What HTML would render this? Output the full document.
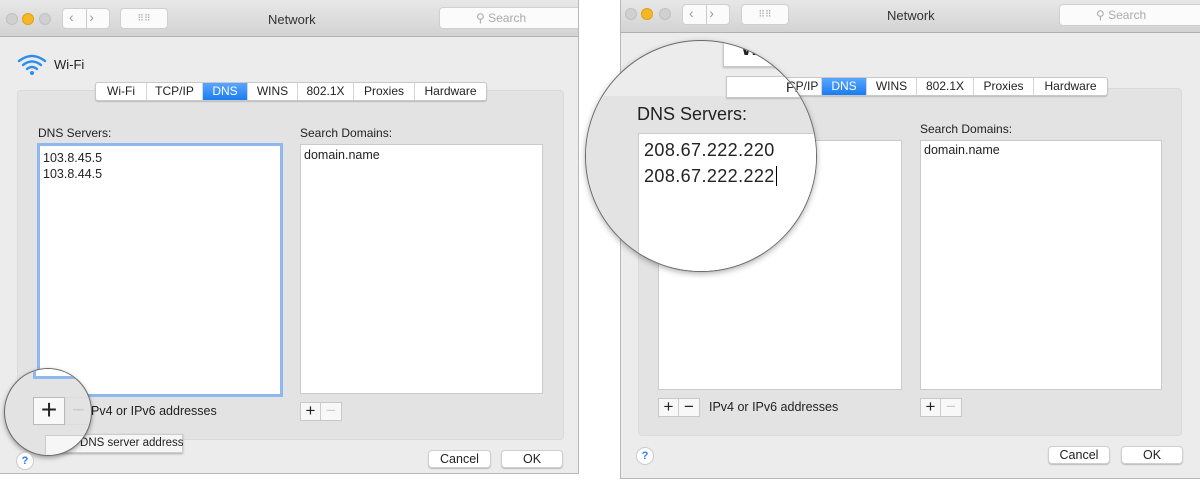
<!DOCTYPE html>
<html><head><meta charset="utf-8"><style>
*{margin:0;padding:0;box-sizing:border-box}
body{width:1200px;height:481px;background:#fff;position:relative;overflow:hidden;font-family:"Liberation Sans",sans-serif;font-size:12px;color:#222}
.a{position:absolute;white-space:nowrap}
.win{position:absolute;background:#ececec;border:1px solid #b8b8b8;overflow:hidden}
.bar{position:absolute;left:0;right:0;top:0;background:linear-gradient(#e8e8e8,#d3d3d3);border-bottom:1px solid #b0b0b0}
.dot{position:absolute;width:12px;height:12px;border-radius:50%;background:#d0d0d0;border:1px solid #c0c0c0}
.btn{position:absolute;background:#fbfbfb;border:1px solid #cfcfcf;border-radius:4px}
.panel{position:absolute;background:#e3e3e3;border:1px solid #dadada;border-radius:4px}
.tabs{position:absolute;display:flex;height:19px;background:#fff;border:1px solid #c8c8c8;border-radius:3px;box-shadow:0 1px 1px #bbb}
.tabs div{border-right:1px solid #d5d5d5;text-align:center;line-height:17px;font-size:12px}
.tabs .on{background:linear-gradient(#5aa6ff,#1a7cf0);color:#fff}
.list{position:absolute;background:#fff;border:1px solid #cbcbcb}
.pm{position:absolute;display:flex;height:19px;background:#f8f8f8;border:1px solid #c8c8c8}
.pm div{width:20px;text-align:center;line-height:16px;font-size:17px;border-right:1px solid #ccc}
.pb{position:absolute;background:#fff;border:1px solid #cfcfcf;border-radius:4px;text-align:center;line-height:16px;font-size:12.5px;box-shadow:0 1px 1px #bbb}
.help{position:absolute;width:18px;height:18px;border-radius:50%;background:#fff;border:1px solid #ccc;color:#2a7bf2;text-align:center;font-size:11px;line-height:16px;font-weight:bold}
</style></head><body>

<!-- LEFT WINDOW -->
<div class="win" style="left:-2px;top:-2px;width:581px;height:476px">
 <div class="bar" style="height:38px"></div>
 <div class="dot" style="left:7px;top:14px"></div>
 <div class="dot" style="left:23px;top:14px;background:#f6b726;border-color:#e0a010"></div>
 <div class="dot" style="left:40px;top:14px"></div>
 <div class="btn" style="left:63px;top:9px;width:48px;height:21px"></div>
 <div class="a" style="left:70px;top:10px;color:#999;font-size:14px">&lsaquo;&nbsp;&nbsp;&nbsp;&nbsp;&rsaquo;</div>
 <div class="a" style="left:87px;top:10px;width:1px;height:20px;background:#ccc"></div>
 <div class="btn" style="left:121px;top:9px;width:48px;height:21px;color:#aaa;text-align:center;font-size:9px;line-height:19px">⠿⠿</div>
 <div class="a" style="left:269px;top:13px;font-size:13px;color:#333">Network</div>
 <div class="btn" style="left:440px;top:8px;width:160px;height:22px;color:#aaa;font-size:12px;line-height:20px;padding-left:36px">&#9906; Search</div>
</div>
<svg class="a" style="left:17px;top:53px" width="30" height="24" viewBox="0 0 30 24"><g fill="none" stroke="#2a8ff0" stroke-width="2.4" stroke-linecap="round"><path d="M2 8 Q15 -2 28 8"/><path d="M6 12 Q15 5 24 12"/><path d="M10 16 Q15 12 20 16"/></g><circle cx="15" cy="20" r="2" fill="#2a8ff0"/></svg>
<div class="a" style="left:54px;top:57px;font-size:13px">Wi-Fi</div>
<div class="panel" style="left:17px;top:90px;width:547px;height:350px"></div>
<div class="tabs" style="left:95px;top:82px">
 <div style="width:51px">Wi-Fi</div><div style="width:56px">TCP/IP</div><div class="on" style="width:45px">DNS</div><div style="width:50px">WINS</div><div style="width:56px">802.1X</div><div style="width:61px">Proxies</div><div style="width:71px;border:0">Hardware</div>
</div>
<div class="a" style="left:38px;top:126px">DNS Servers:</div>
<div class="list" style="left:37px;top:143px;width:246px;height:254px;border:3px solid #8fb8ee;padding:4px 3px;line-height:16px;font-size:12.5px">103.8.45.5<br>103.8.44.5</div>
<div class="a" style="left:300px;top:126px">Search Domains:</div>
<div class="list" style="left:300px;top:144px;width:243px;height:250px;padding:3px 3px;font-size:12.5px">domain.name</div>
<div class="pm" style="left:300px;top:402px"><div>+</div><div style="color:#ccc;border:0">−</div></div>
<div class="a" style="left:91px;top:404px;font-size:12.5px">Pv4 or IPv6 addresses</div>
<div class="a" style="left:48px;top:434px;width:135px;height:19px;background:#f6f6f6;border:1px solid #ccc;box-shadow:0 1px 2px #aaa;padding-left:24px;line-height:17px;font-size:11.5px">r DNS server address</div>
<div class="a" style="left:4px;top:368px;width:88px;height:88px;border-radius:50%;border:1.5px solid #6a6a6a;background:#e3e3e3;box-shadow:0 2px 5px rgba(0,0,0,.35);overflow:hidden">
 <div class="a" style="left:28px;top:-20px;width:80px;height:30px;border:3px solid #8fb8ee;background:#fff"></div>
 <div class="a" style="left:28px;top:28px;width:32px;height:28px;background:#f8f8f8;border:1px solid #bbb;text-align:center;font-size:28px;line-height:24px;font-weight:300">+</div>
 <div class="a" style="left:60px;top:28px;width:30px;height:28px;border:1px solid #ddd;color:#ccc;font-size:22px;line-height:24px;padding-left:6px">−</div>
 <div class="a" style="left:40px;top:66px;width:60px;height:24px;background:#f6f6f6;border:1px solid #ccc"></div>
</div>
<div class="help" style="left:16px;top:452px">?</div>
<div class="pb" style="left:428px;top:450px;width:63px;height:18px">Cancel</div>
<div class="pb" style="left:501px;top:450px;width:62px;height:18px">OK</div>

<!-- RIGHT WINDOW -->
<div class="win" style="left:620px;top:-2px;width:584px;height:481px">
 <div class="bar" style="height:34px"></div>
 <div class="dot" style="left:4px;top:9px"></div>
 <div class="dot" style="left:20px;top:9px;background:#f6b726;border-color:#e0a010"></div>
 <div class="dot" style="left:38px;top:9px"></div>
 <div class="btn" style="left:61px;top:5px;width:48px;height:21px"></div>
 <div class="a" style="left:68px;top:6px;color:#999;font-size:14px">&lsaquo;&nbsp;&nbsp;&nbsp;&nbsp;&rsaquo;</div>
 <div class="a" style="left:85px;top:6px;width:1px;height:20px;background:#ccc"></div>
 <div class="btn" style="left:120px;top:5px;width:48px;height:21px;color:#aaa;text-align:center;font-size:9px;line-height:19px">⠿⠿</div>
 <div class="a" style="left:266px;top:9px;font-size:13px;color:#333">Network</div>
 <div class="btn" style="left:438px;top:5px;width:160px;height:22px;color:#aaa;font-size:12px;line-height:20px;padding-left:36px">&#9906; Search</div>
</div>
<div class="panel" style="left:638px;top:88px;width:544px;height:348px"></div>
<div class="tabs" style="left:720px;top:77px">
 <div style="width:56px">Wi-Fi</div><div style="width:45px">TCP/IP</div><div class="on" style="width:45px">DNS</div><div style="width:50px">WINS</div><div style="width:57px">802.1X</div><div style="width:60px">Proxies</div><div style="width:73px;border:0">Hardware</div>
</div>
<div class="list" style="left:658px;top:140px;width:244px;height:250px"></div>
<div class="a" style="left:920px;top:122px">Search Domains:</div>
<div class="list" style="left:920px;top:140px;width:242px;height:250px;padding:2px 3px;font-size:12.5px">domain.name</div>
<div class="pm" style="left:658px;top:398px"><div>+</div><div style="border:0">−</div></div>
<div class="a" style="left:709px;top:400px;font-size:12.5px">IPv4 or IPv6 addresses</div>
<div class="pm" style="left:920px;top:398px"><div>+</div><div style="color:#ccc;border:0">−</div></div>
<div class="help" style="left:636px;top:447px">?</div>
<div class="pb" style="left:1048px;top:446px;width:62px;height:18px">Cancel</div>
<div class="pb" style="left:1121px;top:446px;width:62px;height:18px">OK</div>
<!-- magnifier -->
<div class="a" style="left:585px;top:40px;width:232px;height:232px;border-radius:50%;border:1.5px solid #6a6a6a;background:#ececec;box-shadow:0 2px 6px rgba(0,0,0,.3);overflow:hidden">
 <div class="a" style="left:-8px;top:2px;width:30px;height:30px;border-radius:50%;border:4px solid #2a8ff0;border-right-color:transparent;border-bottom-color:transparent"></div>
 <div class="a" style="left:0;top:55px;width:232px;height:200px;background:#e3e3e3"></div>
 <div class="a" style="left:137px;top:-8px;width:60px;height:34px;background:#fff;border:1px solid #c8c8c8;box-shadow:0 1px 2px #bbb;font-size:20px;font-weight:bold;padding:4px 0 0 17px">W</div>
 <div class="a" style="left:140px;top:35px;width:100px;height:22px;background:#fff;border:1px solid #c8c8c8;box-shadow:0 1px 1px #bbb;font-size:14px;line-height:20px;padding-left:59px">P/IP</div>
 <div class="a" style="left:51px;top:63px;font-size:18px">DNS Servers:</div>
 <div class="a" style="left:52px;top:92px;width:200px;height:160px;background:#fff;border:1px solid #ccc;padding:3px 5px;font-size:18px;line-height:26px;letter-spacing:.4px">208.67.222.220<br>208.67.222.222<span style="border-left:1.5px solid #000;margin-left:1px"></span></div>
</div>
</body></html>
